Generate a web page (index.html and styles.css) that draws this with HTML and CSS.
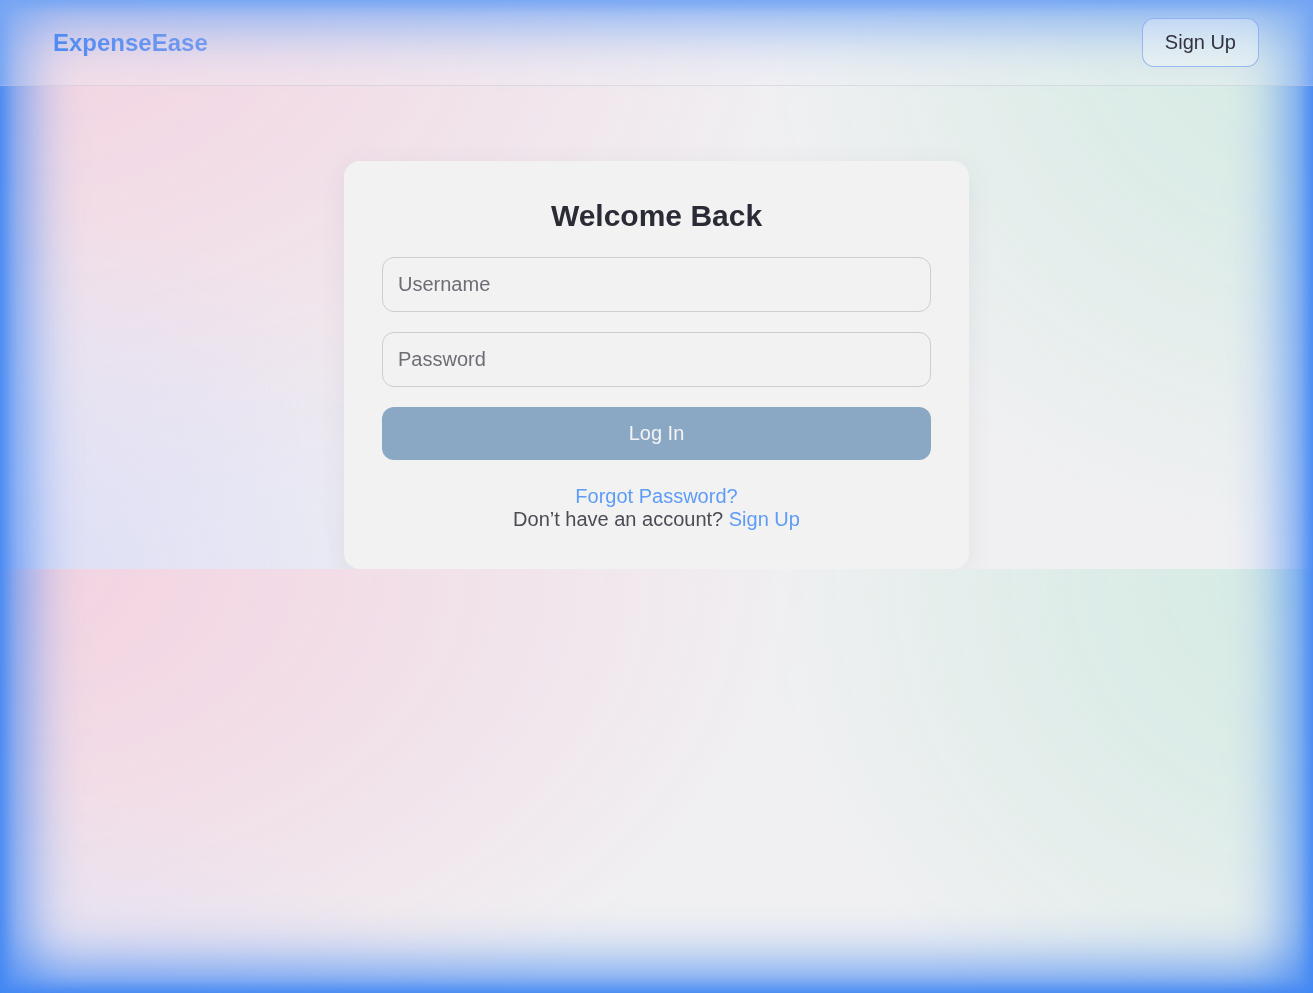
FILE: index.html
```html
<!DOCTYPE html>
<html lang="en">
<head>
<meta charset="utf-8">
<title>ExpenseEase – Log In</title>
<link rel="stylesheet" href="styles.css">
</head>
<body>
<div class="glow"></div>
<header class="topbar">
  <div class="logo">ExpenseEase</div>
  <button class="signup-btn" type="button">Sign Up</button>
</header>
<main class="main">
  <section class="card">
    <h1 class="title">Welcome Back</h1>
    <form class="form">
      <input class="field" type="text" placeholder="Username">
      <input class="field" type="password" placeholder="Password">
      <button class="login-btn" type="button">Log In</button>
    </form>
    <div class="links">
      <a class="link" href="#">Forgot Password?</a>
      <p class="signup-line">Don’t have an account? <a class="link" href="#">Sign Up</a></p>
    </div>
  </section>
</main>
</body>
</html>
```
FILE: styles.css
```css
html, body {
  margin: 0;
  padding: 0;
}

body {
  font-family: "Liberation Sans", Arial, sans-serif;
  color: #2a2b35;
  background:
    radial-gradient(ellipse 38% 62% at 0% 100%, rgba(222, 222, 246, 1) 0%, rgba(222, 222, 246, 0.6) 45%, rgba(222, 222, 246, 0) 100%),
    radial-gradient(ellipse 42% 95% at 100% 0%, rgba(214, 235, 228, 1) 0%, rgba(214, 235, 228, 0.75) 40%, rgba(214, 235, 228, 0) 100%),
    radial-gradient(ellipse 62% 95% at 0% 0%, rgba(243, 210, 224, 1) 0%, rgba(243, 212, 226, 0.7) 40%, rgba(243, 212, 226, 0) 100%),
    #f0f0f2;
}

.glow {
  position: fixed;
  inset: 0;
  z-index: -1;
  pointer-events: none;
  box-shadow: inset 0 0 60px 20px #4287f3, inset 0 0 14px 4px #3f84f2;
}

.topbar {
  height: 85px;
  display: flex;
  align-items: center;
  justify-content: space-between;
  padding: 0 54px 0 53px;
  background: rgba(242, 242, 248, 0.28);
  border-bottom: 1px solid rgba(190, 190, 210, 0.4);
}

.logo {
  font-size: 24px;
  font-weight: 700;
  line-height: 28px;
  background: linear-gradient(90deg, #4f8bf2 0%, #6593f0 55%, #7499ef 100%);
  -webkit-background-clip: text;
  background-clip: text;
  color: transparent;
}

.signup-btn {
  height: 49px;
  padding: 0 22px;
  font-family: "Liberation Sans", Arial, sans-serif;
  font-size: 20px;
  color: #333340;
  background: rgba(255, 255, 255, 0.3);
  border: 1px solid rgba(120, 160, 240, 0.7);
  border-radius: 12px;
  cursor: pointer;
}

.main {
  display: flex;
  justify-content: center;
  padding-top: 75px;
}

.card {
  width: 625px;
  box-sizing: border-box;
  padding: 38px 38px 38px;
  background: #f2f2f2;
  border-radius: 16px;
  box-shadow: 0 6px 28px rgba(60, 60, 90, 0.08);
}

.title {
  margin: 0 0 24px;
  font-size: 30px;
  line-height: 34px;
  font-weight: 700;
  text-align: center;
  color: #2a2b35;
}

.form {
  display: flex;
  flex-direction: column;
  gap: 20px;
}

.field {
  box-sizing: border-box;
  width: 100%;
  height: 55px;
  padding: 0 15px;
  font-family: "Liberation Sans", Arial, sans-serif;
  font-size: 20px;
  color: #333;
  background: transparent;
  border: 1px solid #cdcdd2;
  border-radius: 12px;
  outline: none;
}

.field::placeholder {
  color: #6d6d76;
}

.login-btn {
  height: 53px;
  font-family: "Liberation Sans", Arial, sans-serif;
  font-size: 20px;
  color: #f4f4f6;
  background: #8aa8c4;
  border: none;
  border-radius: 12px;
  cursor: pointer;
}

.links {
  margin-top: 25px;
  text-align: center;
  font-size: 20px;
  line-height: 23px;
}

.link {
  color: #5e9cf5;
  text-decoration: none;
}

.signup-line {
  margin: 0;
  color: #4b4b55;
}
```
